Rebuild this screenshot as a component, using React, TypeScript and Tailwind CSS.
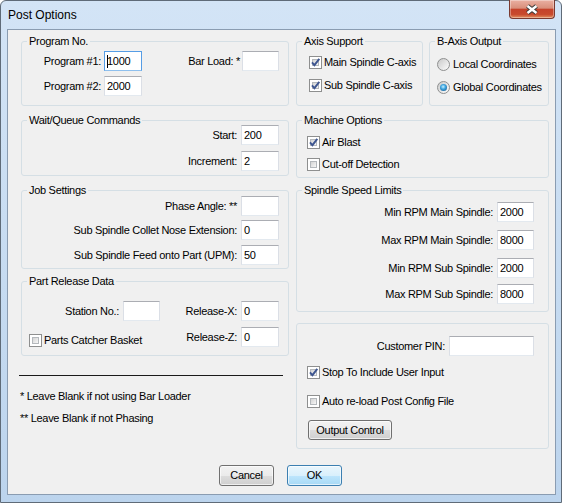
import type { ReactNode } from 'react';

function Group({ title, className, children }: { title?: string; className: string; children: ReactNode }) {
  return (
    <div className={`relative rounded-[3px] border border-[#d5dfe5] ${className}`}>
      {title && (
        <span className="absolute -top-[7px] left-[5px] bg-[#f0f0f0] px-[2px] leading-[13px] whitespace-nowrap">
          {title}
        </span>
      )}
      {children}
    </div>
  );
}

function TextBox({ w, value = '', focused }: { w: string; value?: string; focused?: boolean }) {
  return (
    <div
      className={`${w} h-[20px] flex-none flex items-center bg-white border pl-[2px] leading-none ${
        focused ? 'border-[#569de5] border-b-[#8fc0ee]' : 'border-[#abadb3] border-x-[#dbdfe6] border-b-[#e3e9ef]'
      }`}
    >
      {focused && <span className="w-px h-[13px] bg-black -mr-px" />}
      {value}
    </div>
  );
}

function Field({ label, labelW, box, value, gap = 'mr-[4px]', focused }: { label: string; labelW?: string; box: string; value?: string; gap?: string; focused?: boolean }) {
  return (
    <>
      <span className={`${labelW ?? ''} ${gap} text-right whitespace-nowrap`}>{label}</span>
      <TextBox w={box} value={value} focused={focused} />
    </>
  );
}

function CheckBox({ checked }: { checked?: boolean }) {
  return (
    <span className="relative flex-none w-[13px] h-[13px] border border-[#8e8f8f] bg-white p-[2px]">
      <span className="block w-full h-full border border-[#b4b8bc] bg-[linear-gradient(135deg,#d4d4d4,#f7f7f7)]" />
      {checked && (
        <svg className="absolute left-0 top-0" width="11" height="11" viewBox="0 0 11 11">
          <path d="M2 5.4 L4.4 8.2 L9.3 1.8" fill="none" stroke="#3e5690" strokeWidth="1.9" />
        </svg>
      )}
    </span>
  );
}

function Check({ label, checked, className = '' }: { label: string; checked?: boolean; className?: string }) {
  return (
    <div className={`flex items-center h-[13px] gap-[2px] whitespace-nowrap ${className}`}>
      <CheckBox checked={checked} />
      <span>{label}</span>
    </div>
  );
}

function Radio({ label, checked, className = '' }: { label: string; checked?: boolean; className?: string }) {
  return (
    <div className={`flex items-center h-[13px] gap-[3px] whitespace-nowrap ${className}`}>
      <span className="flex-none w-[13px] h-[13px] rounded-full border border-[#8e8f8f] bg-[linear-gradient(135deg,#c9c9c9,#fdfdfd)] flex items-center justify-center">
        {checked && (
          <span className="w-[7px] h-[7px] rounded-full bg-[radial-gradient(circle_at_45%_40%,#c8f1ff_0%,#3ea5df_40%,#0d4a80_100%)]" />
        )}
      </span>
      <span>{label}</span>
    </div>
  );
}

function Button({ children, w, h = 'h-[21px]', isDefault }: { children: ReactNode; w: string; h?: string; isDefault?: boolean }) {
  return (
    <div
      className={`${w} ${h} rounded-[3px] border flex items-center justify-center shadow-[inset_0_0_0_1px_rgba(255,255,255,0.65)] ${
        isDefault
          ? 'border-[#3c7fb1] bg-[linear-gradient(to_bottom,#eaf6fd_0%,#d9f0fc_50%,#bee6fd_50%,#a7d9f5_100%)]'
          : 'border-[#707070] bg-[linear-gradient(to_bottom,#f2f2f2_0%,#ebebeb_50%,#dddddd_50%,#cfcfcf_100%)]'
      }`}
    >
      {children}
    </div>
  );
}

export default function App() {
  return (
    <div className="w-[562px] h-[503px] flex flex-col rounded-t-[6px] border border-[#5f6b78] bg-[linear-gradient(to_bottom,#d3e4f6,#bcd4ed)] font-['Liberation_Sans',Arial,sans-serif] text-[11px] tracking-[-0.3px] text-black">
      {/* title bar */}
      <div className="h-[28px] flex justify-between">
        <span className="self-center pl-[7px] text-[12px] tracking-normal">Post Options</span>
        <div className="w-[46px] h-[19px] -mt-px mr-[6px] rounded-b-[4px] border border-t-0 border-[#7a3a30] bg-[linear-gradient(to_bottom,#eab0a2_0%,#d98f7b_45%,#c5432b_52%,#c84a2d_80%,#e2905f_100%)] shadow-[inset_0_0_0_1px_rgba(255,255,255,0.35)] flex items-center justify-center">
          <svg width="16" height="11" viewBox="0 0 16 11">
            <path d="M3.5 2 L12.5 9 M12.5 2 L3.5 9" stroke="#3a3a3a" strokeWidth="4.4" />
            <path d="M3.5 2 L12.5 9 M12.5 2 L3.5 9" stroke="#ffffff" strokeWidth="2.4" />
          </svg>
        </div>
      </div>

      {/* client area */}
      <div className="ml-[6px] w-[549px] h-[466px] border border-[#8a9cb1] bg-[#f0f0f0] pl-[13px] pt-[11px]">
        <div className="flex gap-[7px]">
          {/* left column */}
          <div className="w-[268px] flex flex-col">
            <Group title="Program No." className="h-[65px] pt-[9px]">
              <div className="flex items-center">
                <Field label="Program #1:" labelW="w-[79px]" gap="mr-[3px]" box="w-[38px]" value="1000" focused />
                <span className="w-[98px] mr-[2px] text-right whitespace-nowrap">Bar Load: *</span>
                <TextBox w="w-[37px]" />
              </div>
              <div className="flex items-center mt-[5px]">
                <Field label="Program #2:" labelW="w-[79px]" gap="mr-[3px]" box="w-[38px]" value="2000" />
              </div>
            </Group>

            <Group title="Wait/Queue Commands" className="h-[56px] mt-[14px] pt-[4px] pr-[9px]">
              <div className="flex items-center justify-end">
                <Field label="Start:" box="w-[38px]" value="200" />
              </div>
              <div className="flex items-center justify-end mt-[6px]">
                <Field label="Increment:" box="w-[38px]" value="2" />
              </div>
            </Group>

            <Group title="Job Settings" className="h-[79px] mt-[14px] pt-[5px] pr-[9px]">
              <div className="flex items-center justify-end">
                <Field label="Phase Angle: **" box="w-[38px]" />
              </div>
              <div className="flex items-center justify-end mt-[4px]">
                <Field label="Sub Spindle Collet Nose Extension:" box="w-[38px]" value="0" />
              </div>
              <div className="flex items-center justify-end mt-[5px]">
                <Field label="Sub Spindle Feed onto Part (UPM):" box="w-[38px]" value="50" />
              </div>
            </Group>

            <Group title="Part Release Data" className="h-[75px] mt-[12px] pt-[19px] pr-[9px]">
              <div className="flex items-center">
                <Field label="Station No.:" labelW="w-[97px]" box="w-[37px]" />
                <span className="flex-1" />
                <Field label="Release-X:" box="w-[38px]" value="0" />
              </div>
              <div className="flex items-start mt-[6px]">
                <Check label="Parts Catcher Basket" className="ml-[7px] mt-[7px]" />
                <span className="flex-1" />
                <div className="flex items-center">
                  <Field label="Release-Z:" box="w-[38px]" value="0" />
                </div>
              </div>
            </Group>

            <div className="mt-[19px] -ml-[2px] w-[264px] h-px bg-[#1a1a1a]" />
            <p className="mt-[14px] -ml-px leading-[13px] whitespace-nowrap">* Leave Blank if not using Bar Loader</p>
            <p className="mt-[9px] -ml-px leading-[13px] whitespace-nowrap">** Leave Blank if not Phasing</p>
          </div>

          {/* right column */}
          <div className="w-[253px] flex flex-col">
            <div className="flex gap-[6px]">
              <Group title="Axis Support" className="w-[127px] h-[65px] pl-[12px] pt-[14px]">
                <Check label="Main Spindle C-axis" checked />
                <Check label="Sub Spindle C-axis" checked className="mt-[10px]" />
              </Group>
              <Group title="B-Axis Output" className="w-[120px] h-[65px] pl-[7px] pt-[16px]">
                <Radio label="Local Coordinates" />
                <Radio label="Global Coordinates" checked className="mt-[10px]" />
              </Group>
            </div>

            <Group title="Machine Options" className="h-[58px] mt-[14px] pl-[10px] pt-[15px]">
              <Check label="Air Blast" checked />
              <Check label="Cut-off Detection" className="mt-[9px]" />
            </Group>

            <Group title="Spindle Speed Limits" className="h-[122px] mt-[12px] pt-[11px] pr-[14px]">
              <div className="flex items-center justify-end">
                <Field label="Min RPM Main Spindle:" box="w-[37px]" value="2000" />
              </div>
              <div className="flex items-center justify-end mt-[8px]">
                <Field label="Max RPM Main Spindle:" box="w-[37px]" value="8000" />
              </div>
              <div className="flex items-center justify-end mt-[8px]">
                <Field label="Min RPM Sub Spindle:" box="w-[37px]" value="2000" />
              </div>
              <div className="flex items-center justify-end mt-[6px]">
                <Field label="Max RPM Sub Spindle:" box="w-[37px]" value="8000" />
              </div>
            </Group>

            <Group className="h-[126px] mt-[11px] pt-[12px] pl-[10px] pr-[14px]">
              <div className="flex items-center justify-end">
                <Field label="Customer PIN:" box="w-[85px]" />
              </div>
              <Check label="Stop To Include User Input" checked className="mt-[10px]" />
              <Check label="Auto re-load Post Config File" className="mt-[16px]" />
              <div className="mt-[12px] ml-px">
                <Button w="w-[84px]" h="h-[20px]">Output Control</Button>
              </div>
            </Group>
          </div>
        </div>

        <div className="flex justify-center gap-[13px] mt-[16px] pr-[15px]">
          <Button w="w-[55px]">Cancel</Button>
          <Button w="w-[55px]" isDefault>OK</Button>
        </div>
      </div>
    </div>
  );
}
